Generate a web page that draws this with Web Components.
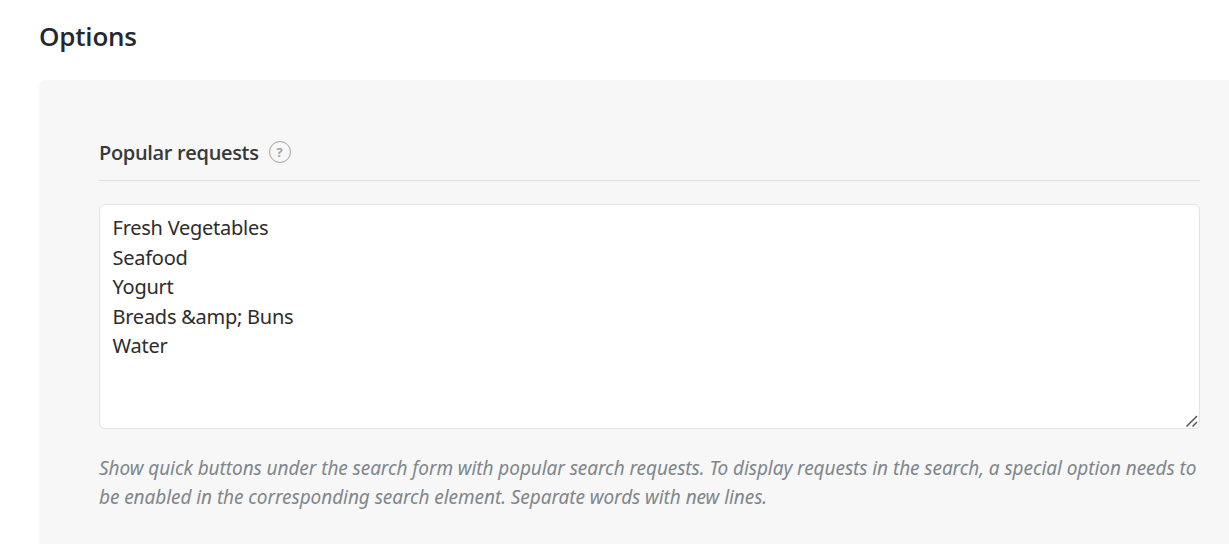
<!DOCTYPE html>
<html lang="en"><head><meta charset="utf-8"><title>Options</title>
<style>html,body{margin:0;height:100%;overflow:hidden;background:#fff}body{font-family:"Noto Sans","Open Sans",sans-serif}</style></head>
<body>
<options-page>
<span slot="title">Options</span>
<option-field><span slot="label">Popular requests</span>
<request-box><request-line>Fresh Vegetables</request-line><request-line>Seafood</request-line><request-line>Yogurt</request-line><request-line>Breads &amp;amp; Buns</request-line><request-line>Water</request-line></request-box>
<field-note slot="note"><note-line>Show quick buttons under the search form with popular search requests. To display requests in the search, a special option needs to</note-line><note-line>be enabled in the corresponding search element. Separate words with new lines.</note-line></field-note>
</option-field>
</options-page>
<script>
function define(name, html){customElements.define(name, class extends HTMLElement{constructor(){super();this.attachShadow({mode:'open'}).innerHTML=html;}});}
define('options-page',`<style>:host{display:flex;flex-direction:column;height:544px}h1{margin:0;padding:17px 0 0 39px;height:63px;box-sizing:content-box;font:600 26px/39px "Open Sans",sans-serif;color:#23282d;letter-spacing:-.2px}main{flex:1;margin-left:39px;background:#f7f7f7;border-radius:8px 0 0 0;padding:56px 29px 0 60px}</style><h1><slot name="title"></slot></h1><main><slot></slot></main>`);
define('help-icon',`<style>:host{display:flex;box-sizing:border-box;width:22px;height:22px;border:1.5px solid #a3a3a3;border-radius:50%;align-items:center;justify-content:center;font:700 13px/20px "Open Sans",sans-serif;color:#a3a3a3;letter-spacing:0}</style><span>?</span>`);
define('option-field',`<style>:host{display:block}header{display:flex;align-items:center;gap:10px;height:44px;border-bottom:1px solid #dedede;margin-bottom:23px;font:600 20px/32px "Open Sans",sans-serif;color:#383838;letter-spacing:-.33px}help-icon{margin-top:-12px}h2{font:inherit;margin:-10px 0 0}</style><header><h2><slot name="label"></slot></h2><help-icon></help-icon></header><slot></slot><slot name="note"></slot>`);
define('request-box',`<style>:host{display:grid;box-sizing:border-box;height:225px;border:1px solid #e3e3e3;border-radius:6px;background:#fff;padding:8px 12.5px;align-content:start;font-size:20px;line-height:29.5px;letter-spacing:-.25px;color:#2c2c2c}svg{grid-area:1/1;align-self:start;justify-self:end;width:14px;height:14px;margin:202px -12.5px -216px 0}</style><slot></slot><svg viewBox="0 0 14 14" stroke="#555" stroke-width="1.5"><path d="M1.5 11.5 12 1M7.5 11.5 12 7"/></svg>`);
define('request-line',`<style>:host{display:block;white-space:nowrap}</style><slot></slot>`);
define('field-note',`<style>:host{display:block;padding-top:25px;font-size:19px;line-height:29px;font-style:italic;color:#7f868b}</style><slot></slot>`);
define('note-line',`<style>:host{display:block;white-space:nowrap;letter-spacing:-.07px}</style><slot></slot>`);
</script></body></html>
